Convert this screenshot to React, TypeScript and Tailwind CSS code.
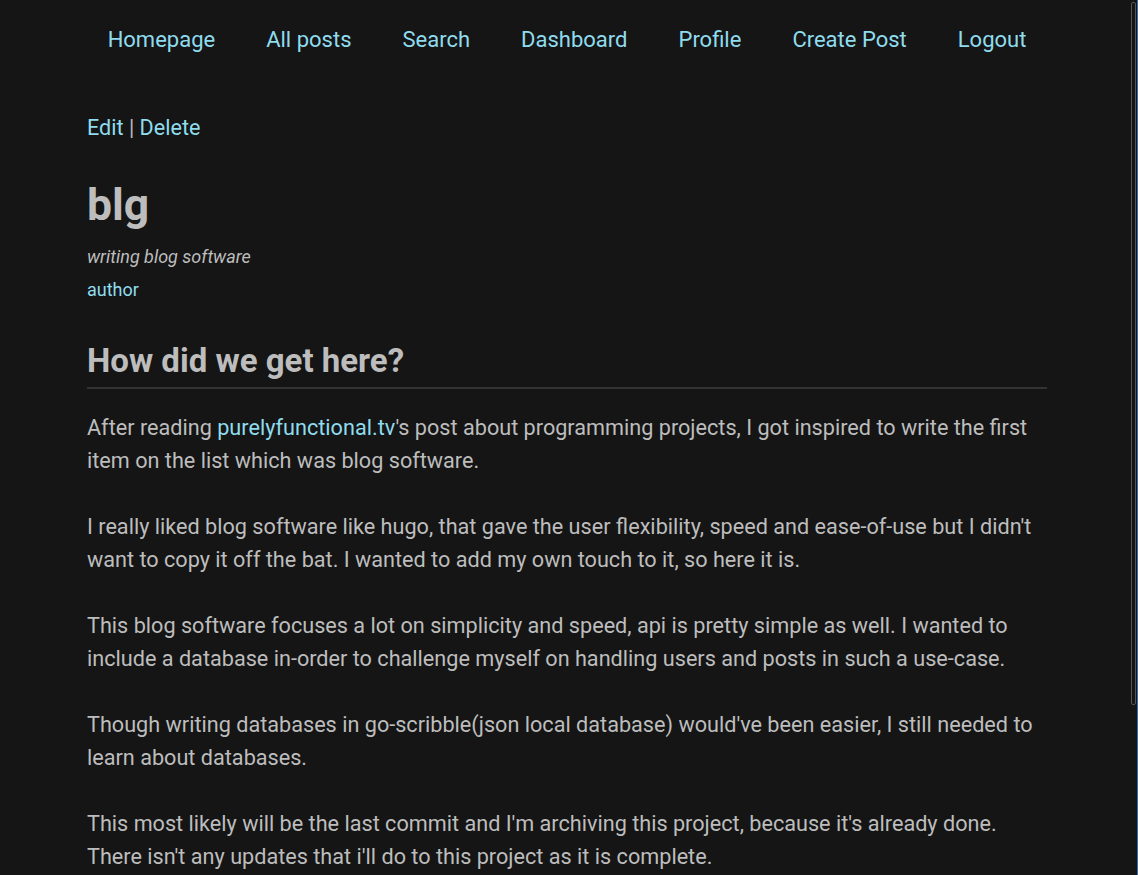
import React from "react";

const navItems = ["Homepage", "All posts", "Search", "Dashboard", "Profile", "Create Post", "Logout"];

export default function App() {
  return (
    <div className="min-h-screen bg-[#151515] text-[#bdbdbd] font-['Roboto',sans-serif] relative">
      <div className="pr-[4px]">
        <nav className="flex justify-center pt-[26px]">
          {navItems.map((n) => (
            <a key={n} className="px-[25.5px] text-[22px] leading-[28px] text-[#8fdcee]">
              {n}
            </a>
          ))}
        </nav>
        <main className="w-[960px] mx-auto pt-[60px]">
          <div className="text-[21.6px] leading-[28px]">
            <a className="text-[#8fdcee]">Edit</a> | <a className="text-[#8fdcee]">Delete</a>
          </div>
          <h1 className="mt-[37px] text-[44.5px] leading-[52px] font-bold text-[#bdbdbd]">blg</h1>
          <p className="mt-[14px] text-[18px] leading-[24px] italic">writing blog software</p>
          <a className="block mt-[9px] text-[18px] leading-[24px] text-[#8fdcee]">author</a>
          <h2 className="mt-[39px] text-[33px] leading-[40px] font-bold pb-[6px] border-b-2 border-[#333333]">
            How did we get here?
          </h2>
          <div className="mt-[22px] text-[21.65px] leading-[33px] flex flex-col gap-[33px]">
            <p>
              After reading <a className="text-[#8fdcee]">purelyfunctional.tv</a>'s post about programming projects, I got inspired to write the first item on the list which was blog software.
            </p>
            <p>
              I really liked blog software like hugo, that gave the user flexibility, speed and ease-of-use but I didn't want to copy it off the bat. I wanted to add my own touch to it, so here it is.
            </p>
            <p>
              This blog software focuses a lot on simplicity and speed, api is pretty simple as well. I wanted to include a database in-order to challenge myself on handling users and posts in such a use-case.
            </p>
            <p>
              Though writing databases in go-scribble(json local database) would've been easier, I still needed to learn about databases.
            </p>
            <p>
              This most likely will be the last commit and I'm archiving this project, because it's already done. There isn't any updates that i'll do to this project as it is complete.
            </p>
          </div>
        </main>
      </div>
      <div className="absolute top-[2px] right-[2px] w-[5px] h-[703px] rounded-[2px] border border-[#555]" />
      <div className="absolute top-0 right-0 w-[1px] h-full bg-[#3a6db0]" />
    </div>
  );
}
